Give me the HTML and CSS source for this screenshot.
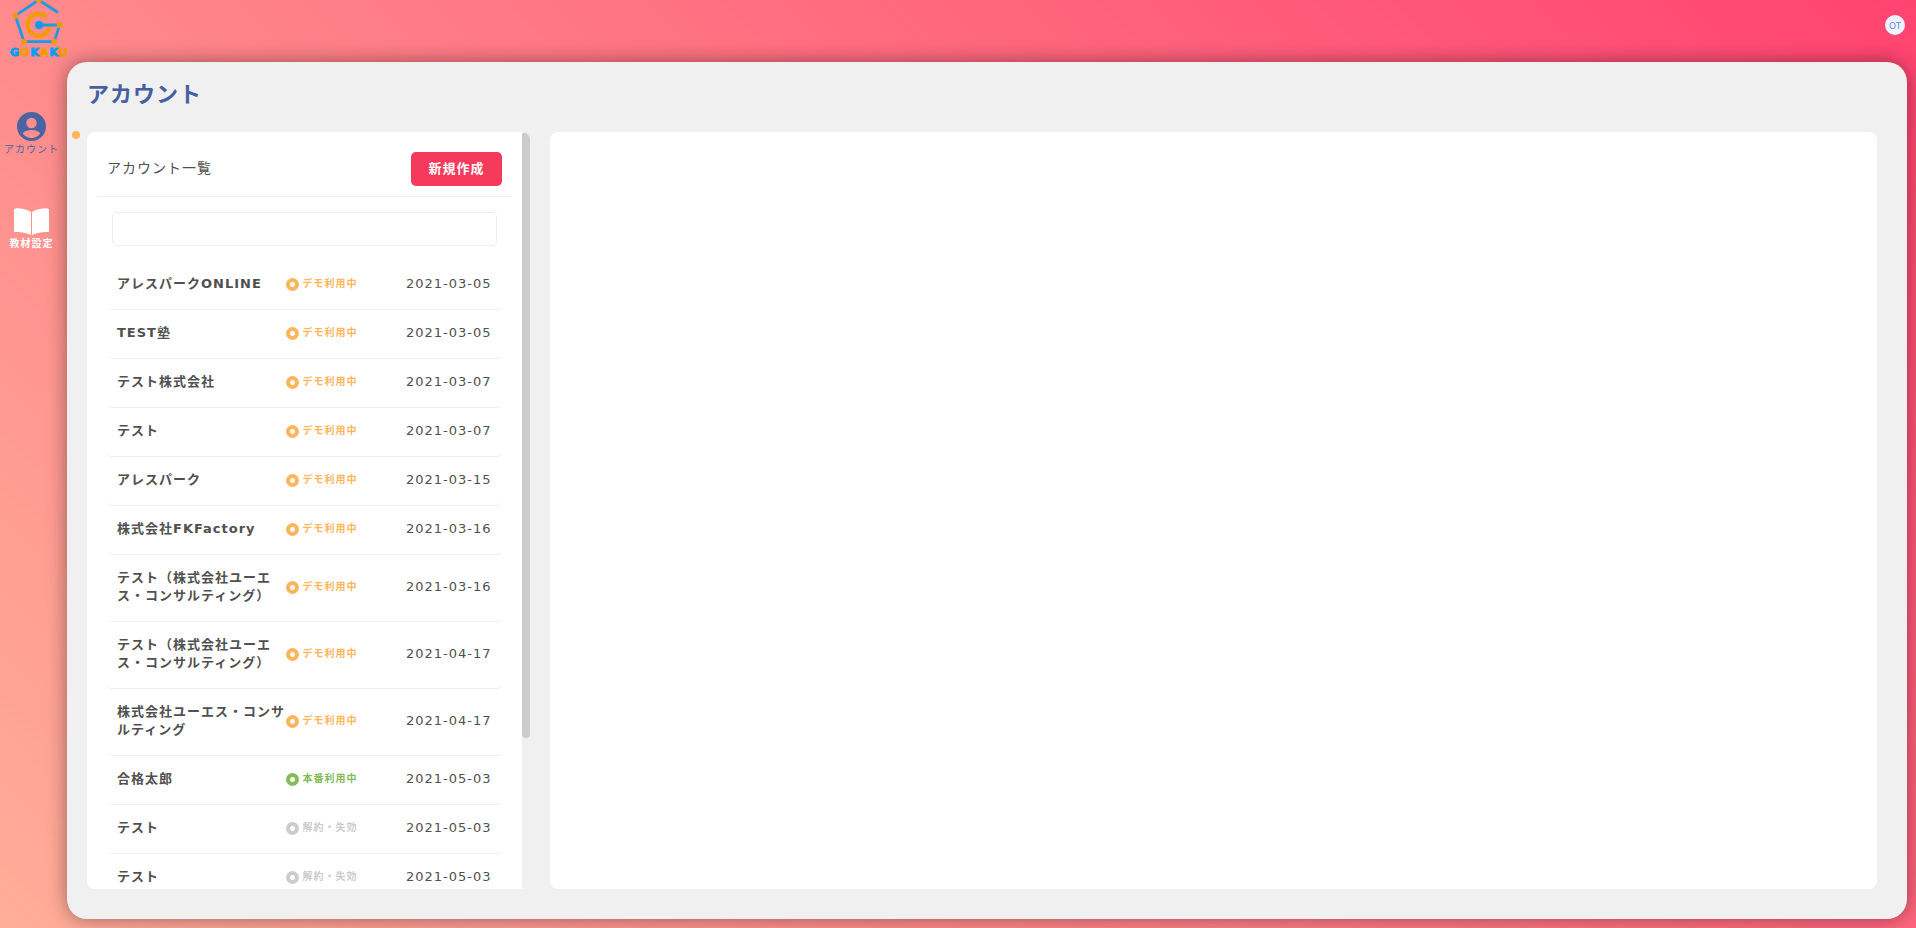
FILE: index.html
```html
<!DOCTYPE html>
<html lang="ja">
<head>
    <meta charset="UTF-8">
    <meta name="viewport" content="width=device-width, initial-scale=1.0">
    <title>アカウント | GOKAKU</title>
    <link rel="stylesheet" href="styles.css">
</head>
<body>

<header class="header">
    <a href="#" class="logo">
        <svg class="logo-mark" viewBox="0 0 56 46" aria-hidden="true">
            <path d="M48 12.500 28.700 0 5.300 15.700 14 41.700H44.300L49.700 25H29" fill="none" stroke="#1b9ae6" stroke-width="2.800"/>
            <path d="M36.500 17.200A11 11 0 1 0 39.500 27" fill="none" stroke="#f39a0b" stroke-width="4.400"/>
            <g fill="#f39a0b">
                <circle cx="28.700" cy="0" r="3"/>
                <circle cx="5.300" cy="15.700" r="3"/>
                <circle cx="14" cy="41.700" r="3"/>
                <circle cx="44.300" cy="41.700" r="3"/>
                <circle cx="49.700" cy="25" r="3"/>
            </g>
            <circle cx="29" cy="25" r="4.200" fill="#0b9cf0"/>
        </svg>
        <span class="logo-text">G<i>O</i>K<i>A</i>K<i>U</i></span>
    </a>
    <button type="button" class="avatar">OT</button>
</header>

<div class="layout">
    <nav class="sidebar">
        <a href="#" class="nav-item active">
            <svg width="29" height="29" viewBox="0 0 29 29" aria-hidden="true">
                <path fill="currentColor" fill-rule="evenodd" d="M14.500 0a14.500 14.500 0 1 0 0 29 14.500 14.500 0 0 0 0-29zm0 5.800a5.200 5.200 0 1 1 0 10.400 5.200 5.200 0 0 1 0-10.400zm0 20.200c-3.500 0-6.600-1.500-8.500-4.200.1-2.400 5.300-3.700 8.500-3.700s8.400 1.300 8.500 3.700c-1.900 2.700-5 4.200-8.500 4.200z"/>
            </svg>
            <span>アカウント</span>
        </a>
        <a href="#" class="nav-item">
            <svg width="35" height="27" viewBox="0 0 35 27" aria-hidden="true">
                <path fill="currentColor" d="M0 1.500C1 .5 2 .3 3 .3 8 .5 13 1.500 17 4v23C12 24.500 6 24 0 24zM35 1.500C34 .5 33 .3 32 .3 27 .5 22 1.500 18 4v23c5-2.500 11-3 17-3z"/>
            </svg>
            <span>教材設定</span>
        </a>
    </nav>

    <main class="panel">
        <h1>アカウント</h1>
        <div class="columns">
            <span class="marker"></span>
            <section class="card account-card">
                <div class="account-scroll">
                    <div class="card-head">
                        <h2>アカウント一覧</h2>
                        <button type="button" class="btn-new">新規作成</button>
                    </div>
                    <input type="text" class="search" aria-label="アカウント一覧">
                    <ul class="account-list">
                        <li><span class="name">アレスパークONLINE</span><span class="status demo">デモ利用中</span><time>2021-03-05</time></li>
                        <li><span class="name">TEST塾</span><span class="status demo">デモ利用中</span><time>2021-03-05</time></li>
                        <li><span class="name">テスト株式会社</span><span class="status demo">デモ利用中</span><time>2021-03-07</time></li>
                        <li><span class="name">テスト</span><span class="status demo">デモ利用中</span><time>2021-03-07</time></li>
                        <li><span class="name">アレスパーク</span><span class="status demo">デモ利用中</span><time>2021-03-15</time></li>
                        <li><span class="name">株式会社FKFactory</span><span class="status demo">デモ利用中</span><time>2021-03-16</time></li>
                        <li><span class="name">テスト（株式会社ユーエス・コンサルティング）</span><span class="status demo">デモ利用中</span><time>2021-03-16</time></li>
                        <li><span class="name">テスト（株式会社ユーエス・コンサルティング）</span><span class="status demo">デモ利用中</span><time>2021-04-17</time></li>
                        <li><span class="name">株式会社ユーエス・コンサルティング</span><span class="status demo">デモ利用中</span><time>2021-04-17</time></li>
                        <li><span class="name">合格太郎</span><span class="status live">本番利用中</span><time>2021-05-03</time></li>
                        <li><span class="name">テスト</span><span class="status ended">解約・失効</span><time>2021-05-03</time></li>
                        <li><span class="name">テスト</span><span class="status ended">解約・失効</span><time>2021-05-03</time></li>
                    </ul>
                </div>
                <div class="scroll-track"><div class="scroll-thumb"></div></div>
            </section>
            <section class="card"></section>
        </div>
    </main>
</div>

</body>
</html>
```
FILE: styles.css
```css
* {
    box-sizing: border-box;
}

body {
    font-family: "DejaVu Sans", "Noto Sans CJK JP", sans-serif;
    font-size: 13px;
    line-height: 18px;
    letter-spacing: 1px;
    color: #505050;
    background: linear-gradient(45deg, #ffad99, #ff4370);
    display: flex;
    flex-direction: column;
    height: 100vh;
    margin: 0;
    overflow: hidden;
}

h1, h2, ul {
    margin: 0;
    padding: 0;
}

a {
    text-decoration: none;
}

button {
    border: none;
    cursor: pointer;
    font-family: inherit;
}

/* header */
.header {
    display: flex;
    justify-content: space-between;
    height: 62px;
    padding: 0 11px 0 10px;
}

.logo-mark {
    display: block;
    width: 56px;
    height: 46px;
}

.logo-text {
    display: block;
    font-size: 11px;
    font-weight: bold;
    line-height: 14px;
    color: #0b9cf0;
    -webkit-text-stroke: 1px;
}

.logo-text i {
    font-style: normal;
    color: #f39a0b;
}

.avatar {
    width: 20px;
    height: 20px;
    margin-top: 15px;
    padding: 0;
    border-radius: 50%;
    background: #ebf4ff;
    color: #667eea;
    font-family: "Open Sans", sans-serif;
    font-size: 9px;
    letter-spacing: 0;
}

/* layout */
.layout {
    display: flex;
    flex: 1;
    min-height: 0;
    padding: 0 9px 9px 0;
}

.sidebar {
    display: flex;
    flex-direction: column;
    gap: 51px;
    width: 67px;
    padding: 50px 4px 0 0;
}

.nav-item {
    display: flex;
    flex-direction: column;
    align-items: center;
    gap: 2px;
    color: #fff;
    font-size: 10px;
    font-weight: bold;
    line-height: 14px;
    white-space: nowrap;
}

.nav-item.active {
    color: #4a64a3;
    font-weight: normal;
}

.panel {
    display: flex;
    flex-direction: column;
    flex: 1;
    padding: 21px 30px 30px 20px;
    border-radius: 20px;
    background: #f0f0f0;
    box-shadow: 0 0 20px rgba(0, 0, 0, 0.4);
}

h1 {
    margin-bottom: 25px;
    font-size: 22px;
    line-height: 24px;
    color: #4460a0;
}

.columns {
    position: relative;
    display: grid;
    grid-template-columns: 1fr 3fr;
    grid-template-rows: 100%;
    flex: 1;
    gap: 20px;
    min-height: 0;
}

.marker {
    position: absolute;
    top: -1px;
    left: -15px;
    width: 8px;
    height: 8px;
    border-radius: 50%;
    background: #ffb55c;
}

.card {
    border-radius: 8px;
    background: #fff;
}

/* account list */
.account-card {
    display: flex;
    overflow: hidden;
}

.account-scroll {
    flex: 1;
    overflow-y: auto;
    scrollbar-width: none;
}

.scroll-track {
    width: 8px;
    background: #f0f0f0;
}

.scroll-thumb {
    height: 80%;
    border-radius: 4px;
    background: #ccc;
}

.card-head {
    display: flex;
    align-items: center;
    justify-content: space-between;
    margin: 0 10px;
    padding: 20px 10px 10px;
    border-bottom: 1px solid #eee;
}

h2 {
    padding-bottom: 2px;
    font-size: 14px;
    font-weight: normal;
}

.btn-new {
    height: 34px;
    padding: 0 17px 3px;
    border-radius: 5px;
    background: #f63a5b;
    color: #fff;
    font-size: 13px;
    font-weight: bold;
    letter-spacing: 1px;
}

.search {
    display: block;
    width: calc(100% - 50px);
    height: 34px;
    margin: 15px 25px;
    padding: 0 10px;
    border: 1px solid #eee;
    border-radius: 5px;
    font: inherit;
}

.account-list {
    padding: 0 20px;
    list-style: none;
}

.account-list li {
    display: flex;
    align-items: center;
    padding: 14px 10px 16px;
    border-bottom: 1px solid #eee;
    border-radius: 5px;
}

.name {
    width: 45%;
    font-weight: bold;
}

.status {
    display: flex;
    align-items: center;
    gap: 4px;
    flex: 1;
    font-size: 10px;
    font-weight: bold;
}

.status::before {
    content: "";
    width: 13px;
    height: 13px;
    border-radius: 50%;
    background: radial-gradient(circle, #fff 2px, currentColor 3px);
}

.demo {
    color: #ffb55c;
}

.live {
    color: #84bd57;
}

.ended {
    color: #ccc;
}
```
